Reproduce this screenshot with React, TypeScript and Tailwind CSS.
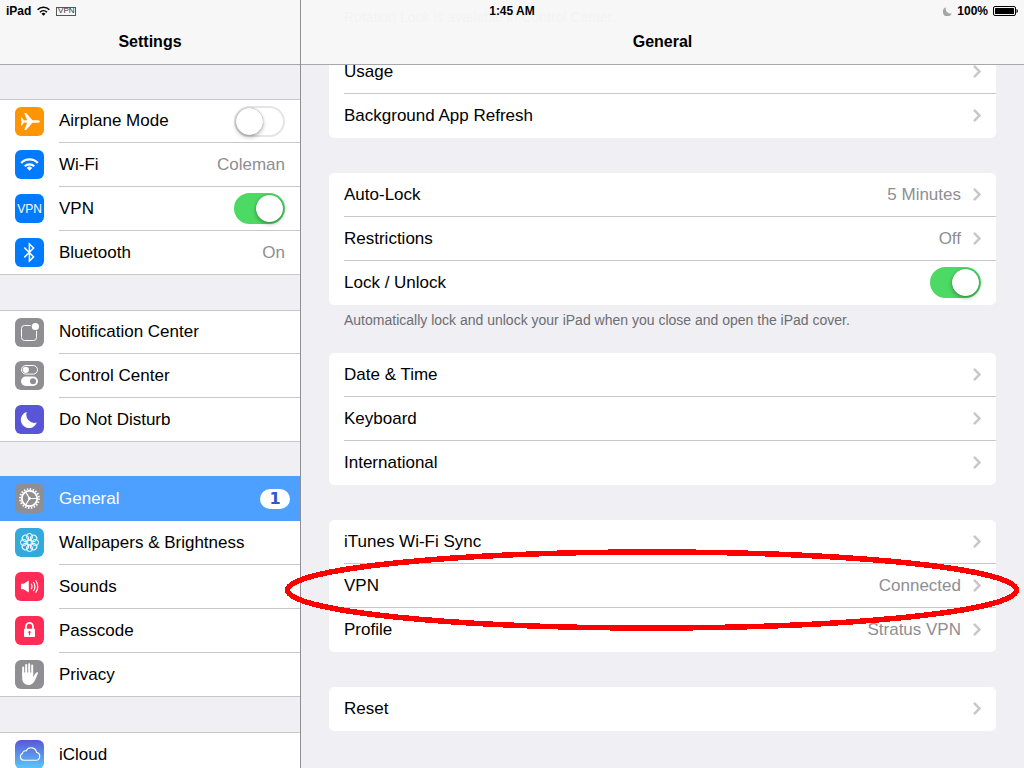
import { useState, type ReactNode } from 'react';
import clsx from 'clsx';

/* ---------- icons, all on a 29px tile ---------- */

function Tile({ className, children }: { className: string; children: ReactNode }) {
  return (
    <span className={clsx('mb-px block size-[29px] shrink-0 overflow-hidden rounded-md text-white', className)}>
      <svg viewBox="0 0 29 29" className="size-full" fill="none" stroke="none" aria-hidden="true">
        {children}
      </svg>
    </span>
  );
}

const AirplaneIcon = () => (
  <Tile className="bg-[#ff9500]">
    <path
      fill="#fff"
      d="M25 14.5c0 .9-1.5 1.3-3 1.3h-4.6L11.2 23H9.3l2.8-7.2L9 15.6l-2.1 3H6l.5-4.1-.5-4.1h.9l2.1 3 3.1-.2L9.3 6h1.9l6.2 7.2H22c1.5 0 3 .4 3 1.3z"
    />
  </Tile>
);

const WifiIcon = () => (
  <Tile className="bg-[#007aff]">
    <g stroke="#fff" strokeWidth="2.2">
      <path d="M6.2 13A11.3 11.3 0 0 1 22.8 13" />
      <path d="M9.7 16.3a6.8 6.8 0 0 1 9.6 0" />
    </g>
    <path fill="#fff" d="M14.5 20.8l-2.7-2.9a3.9 3.9 0 0 1 5.4 0z" />
  </Tile>
);

const BluetoothIcon = () => (
  <Tile className="bg-[#007aff]">
    <path stroke="#fff" strokeWidth="1.5" d="M9.3 9.5l9.3 9.4-4.2 4V6l4.2 4-9.3 9.4" />
  </Tile>
);

const NotificationIcon = () => (
  <Tile className="bg-[#8e8e93]">
    <rect x="6.5" y="7.5" width="15" height="15" rx="3" stroke="#fff" />
    <circle cx="20.4" cy="8.5" r="4.6" fill="#8e8e93" />
    <circle cx="20.4" cy="8.5" r="3.6" fill="#fff" />
  </Tile>
);

const ControlIcon = () => (
  <Tile className="bg-[#8e8e93]">
    <rect x="6.5" y="4.5" width="16" height="8.6" rx="4.3" stroke="#fff" />
    <circle cx="10.8" cy="8.8" r="3.1" fill="#fff" />
    <rect x="6" y="15.6" width="17" height="9.4" rx="4.7" fill="#fff" />
    <circle cx="18" cy="20.3" r="3" fill="#8e8e93" />
  </Tile>
);

const MoonIcon = () => (
  <Tile className="bg-[#5856d6]">
    <path fill="#fff" d="M11.8 7A8.2 8.2 0 1 0 21.8 17.6 8.2 8.2 0 0 1 11.8 7z" />
  </Tile>
);

const GearIcon = () => (
  <Tile className="bg-[#8e8e93]">
    <circle cx="14.5" cy="14.5" r="9.5" stroke="#fff" strokeWidth="1.9" strokeDasharray="1.49 1.49" />
    <circle cx="14.5" cy="14.5" r="7.7" stroke="#fff" strokeWidth="1.9" />
    <path stroke="#fff" strokeWidth="1.2" d="M14.5 14.5h7M14.5 14.5l-3.5-6M14.5 14.5l-3.5 6" />
    <circle cx="14.5" cy="14.5" r="1.4" fill="#fff" />
  </Tile>
);

const FlowerIcon = () => (
  <Tile className="bg-[#34aadc]">
    <g stroke="#fff" strokeWidth="1">
      {[0, 45, 90, 135, 180, 225, 270, 315].map((deg) => (
        <circle key={deg} cx="14.5" cy="8.6" r="3.1" transform={`rotate(${deg} 14.5 14.5)`} />
      ))}
      <circle cx="14.5" cy="14.5" r="2.2" />
    </g>
  </Tile>
);

const SoundIcon = () => (
  <Tile className="bg-[#ff2d55]">
    <path fill="#fff" d="M6 11.8h2.6L13.8 8.6v11.8l-5.2-3.2H6z" />
    <g stroke="#fff" strokeWidth="1.1">
      <path d="M16.2 11.8a5 5 0 0 1 0 5.4" />
      <path d="M18.4 10a8 8 0 0 1 0 9" />
      <path d="M20.6 8.2a11 11 0 0 1 0 12.6" />
    </g>
  </Tile>
);

const LockIcon = () => (
  <Tile className="bg-[#ff2d55]">
    <path stroke="#fff" strokeWidth="1.8" d="M11 13.5v-3.1a3.5 3.5 0 0 1 7 0v3.1" />
    <rect x="9" y="12.7" width="11" height="8.4" rx="0.8" fill="#fff" />
    <path fill="#ff2d55" d="M14.5 14.9a1.3 1.3 0 0 1 .6 2.4v1.9h-1.2v-1.9a1.3 1.3 0 0 1 .6-2.4z" />
  </Tile>
);

const HandIcon = () => (
  <Tile className="bg-[#8e8e93]">
    <g stroke="#fff" strokeWidth="2" strokeLinecap="round">
      <path d="M8.2 7.6v8M11.2 5v9M14.2 4.2v10M17.2 5.4v9" />
    </g>
    <path
      fill="#fff"
      d="M7.2 12.5h11v4.8c.9-1.8 2-4.2 3.3-4.9.9-.4 1.8 0 1.5.8-1.2 2.6-2.2 6-3.9 8.6-1.2 2-2.9 3.2-5.2 3.2-4.6 0-6.7-3-6.7-7z"
    />
  </Tile>
);

const CloudIcon = () => (
  <Tile className="bg-linear-to-b from-[#5856d6] to-[#5ac8fa]">
    <path
      stroke="#fff"
      strokeWidth="1.1"
      d="M8.6 20.3h12.2a4 4 0 0 0 .8-7.9 5.6 5.6 0 0 0-10.5-1.5 2.9 2.9 0 0 0-3.6 2.7 3.5 3.5 0 0 0 1.1 6.7z"
    />
  </Tile>
);

const VpnIcon = () => (
  <span className="mb-px flex size-[29px] shrink-0 items-center justify-center rounded-md bg-[#007aff] text-xs text-white">
    VPN
  </span>
);

const Chevron = () => (
  <svg viewBox="0 0 8 13" className="h-[13px] w-2 shrink-0" fill="none" aria-hidden="true">
    <path d="M1 .9l5.6 5.6L1 12.1" stroke="#c7c7cc" strokeWidth="2.5" />
  </svg>
);

/* ---------- controls ---------- */

function Switch({ id, defaultChecked }: { id: string; defaultChecked?: boolean }) {
  const [on, setOn] = useState(!!defaultChecked);
  return (
    <input
      id={id}
      type="checkbox"
      role="switch"
      checked={on}
      onChange={(e) => setOn(e.target.checked)}
      className={clsx(
        'flex h-[31px] w-[51px] shrink-0 cursor-pointer appearance-none items-center rounded-full border-2',
        "before:block before:size-[27px] before:rounded-full before:bg-white before:shadow-[0_2px_4px_rgba(0,0,0,0.3),0_0_1px_rgba(0,0,0,0.5)] before:content-['']",
        on ? 'justify-end border-[#4cd964] bg-[#4cd964]' : 'border-[#e5e5e5] bg-white',
      )}
    />
  );
}

type Item = {
  label: string;
  icon?: ReactNode;
  value?: string;
  badge?: number;
  toggle?: boolean;
  selected?: boolean;
};

const sidebar: Item[][] = [
  [
    { label: 'Airplane Mode', icon: <AirplaneIcon />, toggle: false },
    { label: 'Wi-Fi', icon: <WifiIcon />, value: 'Coleman' },
    { label: 'VPN', icon: <VpnIcon />, toggle: true },
    { label: 'Bluetooth', icon: <BluetoothIcon />, value: 'On' },
  ],
  [
    { label: 'Notification Center', icon: <NotificationIcon /> },
    { label: 'Control Center', icon: <ControlIcon /> },
    { label: 'Do Not Disturb', icon: <MoonIcon /> },
  ],
  [
    { label: 'General', icon: <GearIcon />, badge: 1, selected: true },
    { label: 'Wallpapers & Brightness', icon: <FlowerIcon /> },
    { label: 'Sounds', icon: <SoundIcon /> },
    { label: 'Passcode', icon: <LockIcon /> },
    { label: 'Privacy', icon: <HandIcon /> },
  ],
  [{ label: 'iCloud', icon: <CloudIcon /> }],
];

const general: { items: Item[]; note?: string }[] = [
  { items: [{ label: 'Usage' }, { label: 'Background App Refresh' }] },
  {
    items: [
      { label: 'Auto-Lock', value: '5 Minutes' },
      { label: 'Restrictions', value: 'Off' },
      { label: 'Lock / Unlock', toggle: true },
    ],
    note: 'Automatically lock and unlock your iPad when you close and open the iPad cover.',
  },
  { items: [{ label: 'Date & Time' }, { label: 'Keyboard' }, { label: 'International' }] },
  {
    items: [
      { label: 'iTunes Wi-Fi Sync' },
      { label: 'VPN', value: 'Connected' },
      { label: 'Profile', value: 'Stratus VPN' },
    ],
  },
  { items: [{ label: 'Reset' }] },
];

function SidebarRow({ item }: { item: Item }) {
  const id = `side-${item.label.replace(/\W+/g, '-').toLowerCase()}`;
  const isToggle = item.toggle !== undefined;
  const inner = clsx(
    'flex h-full min-w-0 flex-1 items-center justify-between',
    item.selected ? 'pr-[10px]' : 'border-b border-[#c8c7cc] pr-[15px] group-last:border-b-0',
  );
  const row = 'flex size-full items-center gap-[15px] pl-[15px] text-left';

  return (
    <li
      className={clsx(
        'group',
        item.selected ? '-mt-[2px] h-[45px] bg-[#4da0ff] text-white' : 'h-11 first:h-[43px] last:h-[43px]',
      )}
    >
      {isToggle ? (
        <div className={row}>
          {item.icon}
          <div className={inner}>
            <label htmlFor={id}>{item.label}</label>
            <Switch id={id} defaultChecked={item.toggle} />
          </div>
        </div>
      ) : (
        <button type="button" className={row}>
          {item.icon}
          <span className={inner}>
            <span>{item.label}</span>
            {item.value && <span className="text-[#8e8e93]">{item.value}</span>}
            {item.badge && (
              <span className="flex h-5 w-[30px] items-center justify-center rounded-full bg-white font-['DejaVu_Sans',sans-serif] text-base font-bold text-[#2f55d8]">
                {item.badge}
              </span>
            )}
          </span>
        </button>
      )}
    </li>
  );
}

function DetailRow({ item }: { item: Item }) {
  const id = `general-${item.label.replace(/\W+/g, '-').toLowerCase()}`;
  const row =
    'flex size-full items-center justify-between border-b border-[#c8c7cc] pr-[15px] text-left group-last:border-transparent';

  return (
    <li className="group h-11 pl-[15px]">
      {item.toggle !== undefined ? (
        <div className={row}>
          <label htmlFor={id}>{item.label}</label>
          <Switch id={id} defaultChecked={item.toggle} />
        </div>
      ) : (
        <button type="button" className={row}>
          <span>{item.label}</span>
          <span className="flex items-center gap-3 text-[#8e8e93]">
            {item.value}
            <Chevron />
          </span>
        </button>
      )}
    </li>
  );
}

function StatusBar() {
  return (
    <div className="absolute inset-x-0 top-0 z-20 grid h-[22px] grid-cols-3 items-center px-[6px] text-xs font-bold text-black">
      <div className="flex items-center gap-[6px]">
        <span>iPad</span>
        <svg viewBox="0 0 13 10" className="h-[10px] w-[13px]" fill="none" aria-hidden="true">
          <g stroke="#000" strokeWidth="1.6">
            <path d="M.6 3.7a8.4 8.4 0 0 1 11.8 0" />
            <path d="M3 6.2a5 5 0 0 1 7 0" />
          </g>
          <path fill="#000" d="M6.5 9.8L4.5 7.7a2.9 2.9 0 0 1 4 0z" />
        </svg>
        <span className="flex h-[9px] w-5 items-center justify-center border border-[#555] text-[8px] leading-none font-normal text-[#333]">
          VPN
        </span>
      </div>
      <span className="text-center">1:45 AM</span>
      <div className="flex items-center justify-end gap-[5px]">
        <svg viewBox="0 0 9 9" className="size-[9px]" aria-hidden="true">
          <path fill="#a5a5a5" d="M3 .2A4.7 4.7 0 1 0 8.8 6.4 4.8 4.8 0 0 1 3 .2z" />
        </svg>
        <span>100%</span>
        <svg viewBox="0 0 25 10" className="h-[10px] w-[25px]" fill="none" aria-hidden="true">
          <rect x=".5" y=".5" width="22" height="9" rx="1.5" stroke="#000" />
          <rect x="2" y="2" width="19" height="6" rx=".5" fill="#000" />
          <path fill="#000" d="M23.5 3c1 .3 1.3 1 1.3 2s-.3 1.7-1.3 2z" />
        </svg>
      </div>
    </div>
  );
}

export default function App() {
  return (
    <div className="relative flex h-screen overflow-hidden bg-[#efeff4] font-['Liberation_Sans',Arial,sans-serif] text-[17px] leading-5 text-black">
      <StatusBar />

      <aside className="flex w-[301px] shrink-0 flex-col border-r border-[#8f8f94]">
        <header className="flex h-[65px] shrink-0 items-end justify-center border-b border-[#a7a7ac] bg-[#f7f7f7] pb-3">
          <h1 className="text-base leading-5 font-bold">Settings</h1>
        </header>
        <nav className="flex min-h-0 flex-1 flex-col gap-[35px] overflow-hidden pt-[34px]">
          {sidebar.map((group, i) => (
            <ul key={i} className="shrink-0 border-y border-[#c8c7cc] bg-white">
              {group.map((item) => (
                <SidebarRow key={item.label} item={item} />
              ))}
            </ul>
          ))}
        </nav>
      </aside>

      <main className="relative min-w-0 flex-1 overflow-hidden">
        <header className="absolute inset-x-0 top-0 z-10 flex h-[65px] items-end justify-center border-b border-[#a7a7ac] bg-[#f7f7f7]/97 pb-3">
          <h2 className="text-base leading-5 font-bold">General</h2>
        </header>

        <div className="px-7 pt-2">
          <p className="mb-6 px-[15px] text-sm leading-[18px] text-[#6d6d72]">
            Rotation Lock is available in Control Center.
          </p>
          {general.map(({ items, note }, i) => (
            <section key={i} className={note ? 'mb-6' : 'mb-[35px]'}>
              <ul className="rounded-[5px] bg-white">
                {items.map((item) => (
                  <DetailRow key={item.label} item={item} />
                ))}
              </ul>
              {note && <p className="px-[15px] pt-[6px] text-sm leading-[18px] text-[#6d6d72]">{note}</p>}
            </section>
          ))}
        </div>
      </main>

      {/* red marker around the VPN row */}
      <svg
        viewBox="0 0 734 82"
        preserveAspectRatio="none"
        className="pointer-events-none absolute top-[549px] right-[5px] left-[285px] z-30 h-[82px] w-[calc(100%-290px)]"
        fill="none"
        aria-hidden="true"
      >
        <ellipse
          cx="367"
          cy="41"
          rx="364.5"
          ry="38"
          stroke="#f00"
          strokeWidth="5.5"
          vectorEffect="non-scaling-stroke"
          shapeRendering="crispEdges"
        />
      </svg>
    </div>
  );
}
